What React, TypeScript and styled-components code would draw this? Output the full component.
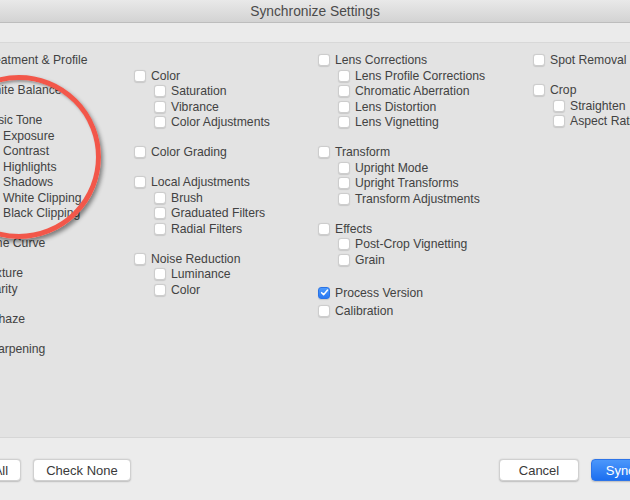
import React from "react";
import styled, { createGlobalStyle } from "styled-components";

const Global = createGlobalStyle`
  html, body { margin: 0; padding: 0; background: #ececec; }
  body { font-family: "Liberation Sans", Arial, sans-serif; }
`;

const Page = styled.div`
  position: relative;
  width: 630px;
  height: 500px;
  overflow: hidden;
  background: #ececec;
`;

const Window = styled.div`
  width: 770px;
  margin-left: -70px;
  height: 500px;
  display: flex;
  flex-direction: column;
`;

const TitleBar = styled.div`
  height: 22px;
  flex: none;
  display: flex;
  align-items: center;
  justify-content: center;
  background: linear-gradient(#e9e9e9, #d3d3d3);
  border-bottom: 1px solid #bdbdbd;
  color: #4b4b4b;
  font-size: 13.8px;
`;

const Strip = styled.div`
  height: 19px;
  flex: none;
  background: #ebebeb;
  border-bottom: 1px solid #d8d8d8;
`;

const Content = styled.div`
  height: 395px;
  flex: none;
  background: #e3e3e3;
  border-bottom: 1px solid #d6d6d6;
  display: grid;
  grid-template-columns: 168px 184px 215px 1fr;
  padding: 9.25px 0 0 36px;
  box-sizing: border-box;
  align-items: start;
`;

const ROW = 15.5;

const Column = styled.div<{ $offset?: number }>`
  display: flex;
  flex-direction: column;
  gap: 14.5px;
  padding-top: ${(p) => (p.$offset ?? 0) * ROW}px;
`;

const Group = styled.div<{ $extra?: number }>`
  display: flex;
  flex-direction: column;
  margin-top: ${(p) => p.$extra ?? 0}px;
`;

const Row = styled.label<{ $sub?: boolean; $h?: number }>`
  display: flex;
  align-items: center;
  gap: 5px;
  height: ${(p) => p.$h ?? ROW}px;
  padding-left: ${(p) => (p.$sub ? 20 : 0)}px;
  font-size: 12.2px;
  line-height: 14px;
  color: #424242;
  white-space: nowrap;
`;

const Box = styled.span<{ $checked?: boolean }>`
  flex: none;
  width: 12px;
  height: 12px;
  box-sizing: border-box;
  border-radius: 3px;
  display: flex;
  align-items: center;
  justify-content: center;
  background: ${(p) => (p.$checked ? "linear-gradient(#4c9afc, #2a78f2)" : "#ffffff")};
  border: 1px solid ${(p) => (p.$checked ? "#2a73e6" : "#cdcdcd")};
  box-shadow: 0 0.5px 1px rgba(0, 0, 0, 0.12);
`;

const Footer = styled.div`
  flex: 1;
  display: flex;
  align-items: center;
  justify-content: space-between;
  padding: 2px 8px 0 11px;
  background: #ececec;
`;

const ButtonGroup = styled.div`
  display: flex;
  gap: 12px;
`;

const Button = styled.button<{ $primary?: boolean; $w: number }>`
  width: ${(p) => p.$w}px;
  height: 22px;
  border-radius: 4px;
  font-family: "Liberation Sans", Arial, sans-serif;
  font-size: 13px;
  padding: 0;
  color: ${(p) => (p.$primary ? "#ffffff" : "#3a3a3a")};
  background: ${(p) => (p.$primary ? "linear-gradient(#4b97fb, #1c6ff0)" : "#ffffff")};
  border: 0.5px solid ${(p) => (p.$primary ? "#2d74e8" : "#d0d0d0")};
  box-shadow: 0 0.5px 1.5px rgba(0, 0, 0, 0.2);
`;

const Ring = styled.div`
  position: absolute;
  left: -63px;
  top: 75px;
  width: 164px;
  height: 164px;
  box-sizing: border-box;
  border-radius: 50%;
  border: 5px solid #f2574a;
  box-shadow: 2px 3px 4px rgba(0, 0, 0, 0.45), inset 2px 2px 3px rgba(0, 0, 0, 0.35);
  pointer-events: none;
`;

type Item = { label: string; sub?: boolean; checked?: boolean; h?: number };

const Check = () => (
  <svg width="9" height="9" viewBox="0 0 10 10">
    <path d="M1.8 5.2 L4 7.4 L8.4 2.3" fill="none" stroke="#fff" strokeWidth="1.7" strokeLinecap="round" strokeLinejoin="round" />
  </svg>
);

const Opt = ({ label, sub, checked, h }: Item) => (
  <Row $sub={sub} $h={h}>
    <Box $checked={checked}>{checked && <Check />}</Box>
    {label}
  </Row>
);

const renderGroups = (groups: Item[][], extras?: (number | undefined)[]) =>
  groups.map((g, i) => (
    <Group key={i} $extra={extras?.[i]}>
      {g.map((it) => (
        <Opt key={it.label} {...it} />
      ))}
    </Group>
  ));

const s = (label: string): Item => ({ label, sub: true });
const m = (label: string): Item => ({ label });

const col1: Item[][] = [
  [m("Treatment & Profile")],
  [m("White Balance")],
  [m("Basic Tone"), s("Exposure"), s("Contrast"), s("Highlights"), s("Shadows"), s("White Clipping"), s("Black Clipping")],
  [m("Tone Curve")],
  [m("Texture"), m("Clarity")],
  [m("Dehaze")],
  [m("Sharpening")],
];

const col2: Item[][] = [
  [m("Color"), s("Saturation"), s("Vibrance"), s("Color Adjustments")],
  [m("Color Grading")],
  [m("Local Adjustments"), s("Brush"), s("Graduated Filters"), s("Radial Filters")],
  [m("Noise Reduction"), s("Luminance"), s("Color")],
];

const col3: Item[][] = [
  [m("Lens Corrections"), s("Lens Profile Corrections"), s("Chromatic Aberration"), s("Lens Distortion"), s("Lens Vignetting")],
  [m("Transform"), s("Upright Mode"), s("Upright Transforms"), s("Transform Adjustments")],
  [m("Effects"), s("Post-Crop Vignetting"), s("Grain")],
  [
    { label: "Process Version", checked: true, h: 18 },
    { label: "Calibration", h: 18 },
  ],
];

const col4: Item[][] = [
  [m("Spot Removal")],
  [m("Crop"), s("Straighten"), s("Aspect Ratio")],
];

export default function App() {
  return (
    <Page>
      <Global />
      <Window>
        <TitleBar>Synchronize Settings</TitleBar>
        <Strip />
        <Content>
          <Column>{renderGroups(col1)}</Column>
          <Column $offset={1}>{renderGroups(col2)}</Column>
          <Column>{renderGroups(col3, [0, 0, 0, 1.75])}</Column>
          <Column>{renderGroups(col4)}</Column>
        </Content>
        <Footer>
          <ButtonGroup>
            <Button $w={80}>Check All</Button>
            <Button $w={98}>Check None</Button>
          </ButtonGroup>
          <ButtonGroup>
            <Button $w={80}>Cancel</Button>
            <Button $w={101} $primary>Synchronize</Button>
          </ButtonGroup>
        </Footer>
      </Window>
      <Ring />
    </Page>
  );
}
